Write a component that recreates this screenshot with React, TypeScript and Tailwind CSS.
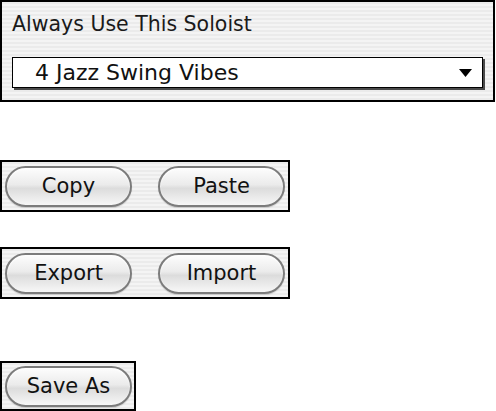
import React from 'react';

const stripes =
  'bg-[repeating-linear-gradient(to_bottom,#ebebeb_0px,#ebebeb_2px,#f4f4f4_2px,#f4f4f4_4px)]';

function AquaButton({ label }: { label: string }) {
  return (
    <button
      className="h-[41px] w-[127px] rounded-full border-2 border-[#7c7c7c] bg-[linear-gradient(to_bottom,#fdfdfd_0%,#ebebeb_45%,#dcdcdc_55%,#f7f7f7_100%)] text-[21px] leading-none text-[#111] shadow-[inset_0_1px_2px_rgba(255,255,255,0.9),0_1px_1px_rgba(0,0,0,0.15)]"
    >
      {label}
    </button>
  );
}

function ButtonGroup({ labels, size }: { labels: string[]; size: string }) {
  return (
    <div className={`${size} border-2 border-black ${stripes} flex items-center gap-[26px] pl-[3px]`}>
      {labels.map((l) => (
        <AquaButton key={l} label={l} />
      ))}
    </div>
  );
}

export default function App() {
  return (
    <div
      className="w-[496px] h-[411px] bg-white overflow-hidden"
      style={{ fontFamily: '"DejaVu Sans", sans-serif' }}
    >
      {/* Soloist panel */}
      <div className={`w-[495px] h-[102px] border-2 border-black ${stripes} pl-[10px] pr-[9px] pt-[7px]`}>
        <div className="text-[20.5px] leading-[30px] text-[#1a1a1a]">Always Use This Soloist</div>
        <div className="mt-[18px] h-[31px] w-[471px] border border-black bg-white shadow-[2px_2px_0_#4a4a4a] flex items-center justify-between pl-[22px] pr-[10px]">
          <span className="text-[22px] leading-none text-[#111]">4 Jazz Swing Vibes</span>
          <svg width="13" height="8" viewBox="0 0 13 8">
            <polygon points="0,0 13,0 6.5,8" fill="#000" />
          </svg>
        </div>
      </div>

      <div className="mt-[58px]">
        <ButtonGroup labels={['Copy', 'Paste']} size="w-[290px] h-[52px]" />
      </div>
      <div className="mt-[35px]">
        <ButtonGroup labels={['Export', 'Import']} size="w-[290px] h-[52px]" />
      </div>
      <div className="mt-[62px]">
        <ButtonGroup labels={['Save As']} size="w-[136px] h-[50px]" />
      </div>
    </div>
  );
}
